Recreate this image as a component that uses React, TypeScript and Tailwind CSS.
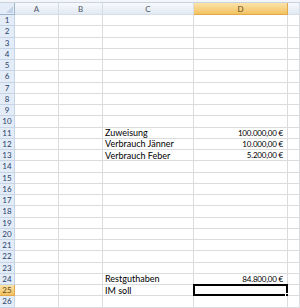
const cols = [
  { key: "A", w: "w-[44px]" },
  { key: "B", w: "w-[44px]" },
  { key: "C", w: "w-[91px]" },
  { key: "D", w: "w-[94px]" },
  { key: "E", w: "flex-1" },
]

const data: Record<number, { c?: string; d?: string }> = {
  11: { c: "Zuweisung", d: "100.000,00 €" },
  12: { c: "Verbrauch Jänner", d: "10.000,00 €" },
  13: { c: "Verbrauch Feber", d: "5.200,00 €" },
  24: { c: "Restguthaben", d: "84.800,00 €" },
  25: { c: "IM soll" },
}

const rows = Array.from({ length: 26 }, (_, i) => i + 1)

export default function App() {
  return (
    <div className="w-[300px] h-[308px] overflow-hidden bg-white text-[8px] text-black" style={{ fontFamily: "Lato, 'Liberation Sans', sans-serif" }}>
      <div className="h-[3px] bg-[#f3f5f8] border-b border-[#c9d3e0]" />
      <div className="flex h-[12px]">
        <div className="w-[15px] shrink-0 bg-[#e4ecf7] border-r border-b border-[#9eb6ce] relative overflow-hidden">
          <div className="absolute right-[1px] bottom-[1px] w-0 h-0 border-l-[7px] border-l-transparent border-b-[7px] border-b-[#c3d3e7]" />
        </div>
        {cols.map((c) => (
          <div
            key={c.key}
            className={`${c.w} shrink-0 flex items-center justify-center border-r border-b leading-none ${
              c.key === "D"
                ? "bg-gradient-to-b from-[#fbe3a8] to-[#f3c25f] border-[#e0a94a] text-[#5b4a1e]"
                : "bg-gradient-to-b from-[#f7f9fc] to-[#e2e9f2] border-[#d5dde8] text-[#4c5566]"
            }`}
          >
            {c.key !== "E" && c.key}
          </div>
        ))}
      </div>
      {rows.map((r) => {
        const sel = r === 25
        const row = data[r] || {}
        return (
          <div key={r} className="flex h-[11.25px]">
            <div
              className={`w-[15px] shrink-0 flex items-center justify-center border-r border-b leading-none ${
                sel
                  ? "bg-gradient-to-b from-[#fbe3a8] to-[#f3c25f] border-[#e0a94a] text-[#5b4a1e]"
                  : "bg-[#e4ecf7] border-[#c5d4e6] text-[#27416b]"
              }`}
            >
              {r}
            </div>
            {cols.map((c) => {
              const isSel = sel && c.key === "D"
              return (
                <div
                  key={c.key}
                  className={`${c.w} shrink-0 border-r border-b border-[#dadcdd] flex items-center leading-none whitespace-nowrap overflow-visible relative ${
                    c.key === "D" ? "justify-end pr-[4px] tracking-[-0.2px]" : "pl-[2px] text-[9px]"
                  }`}
                >
                  {c.key === "C" && row.c}
                  {c.key === "D" && row.d}
                  {isSel && (
                    <div className="absolute left-[-1px] top-[-1px] right-[-1px] bottom-[-1px] border-2 border-black">
                      <div className="absolute right-[-3px] bottom-[-3px] w-[4px] h-[4px] bg-black border border-white" />
                    </div>
                  )}
                </div>
              )
            })}
          </div>
        )
      })}
    </div>
  )
}
